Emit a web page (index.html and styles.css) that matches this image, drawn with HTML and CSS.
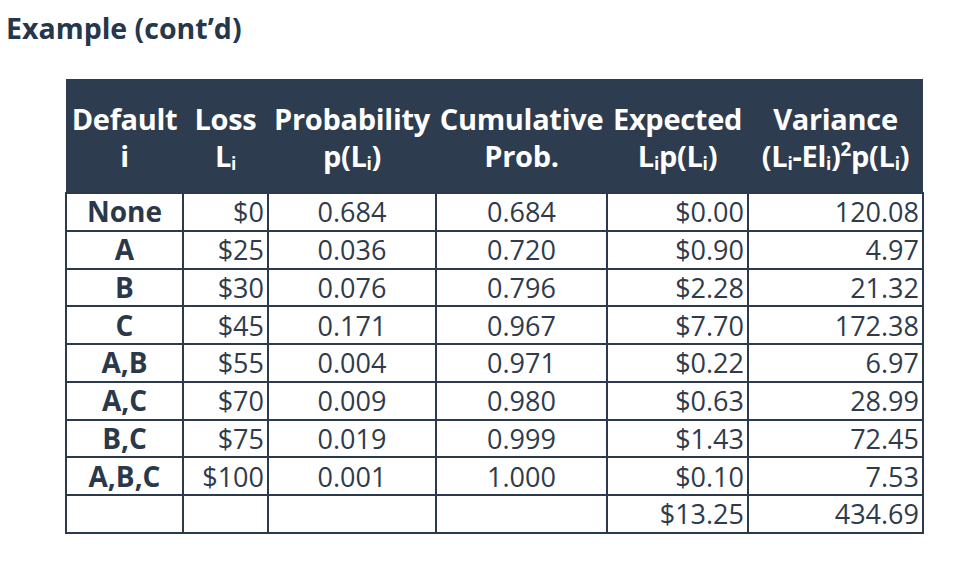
FILE: index.html
```html
<!DOCTYPE html>
<html>
<head>
<meta charset="utf-8">
<link rel="stylesheet" href="styles.css">
</head>
<body>
<h1 class="title">Example (cont’d)</h1>
<table class="tbl">
  <colgroup>
    <col class="c1"><col class="c2"><col class="c3"><col class="c4"><col class="c5"><col class="c6">
  </colgroup>
  <thead>
    <tr>
      <th>Default<br>i</th>
      <th>Loss<br>L<sub>i</sub></th>
      <th>Probability<br>p(L<sub>i</sub>)</th>
      <th>Cumulative<br>Prob.</th>
      <th>Expected<br>L<sub>i</sub>p(L<sub>i</sub>)</th>
      <th>Variance<br>(L<sub>i</sub>-El<sub>i</sub>)<sup>2</sup>p(L<sub>i</sub>)</th>
    </tr>
  </thead>
  <tbody>
    <tr><td class="nm">None</td><td class="r">$0</td><td class="c">0.684</td><td class="c">0.684</td><td class="r">$0.00</td><td class="r">120.08</td></tr>
    <tr><td class="nm">A</td><td class="r">$25</td><td class="c">0.036</td><td class="c">0.720</td><td class="r">$0.90</td><td class="r">4.97</td></tr>
    <tr><td class="nm">B</td><td class="r">$30</td><td class="c">0.076</td><td class="c">0.796</td><td class="r">$2.28</td><td class="r">21.32</td></tr>
    <tr><td class="nm">C</td><td class="r">$45</td><td class="c">0.171</td><td class="c">0.967</td><td class="r">$7.70</td><td class="r">172.38</td></tr>
    <tr><td class="nm">A,B</td><td class="r">$55</td><td class="c">0.004</td><td class="c">0.971</td><td class="r">$0.22</td><td class="r">6.97</td></tr>
    <tr><td class="nm">A,C</td><td class="r">$70</td><td class="c">0.009</td><td class="c">0.980</td><td class="r">$0.63</td><td class="r">28.99</td></tr>
    <tr><td class="nm">B,C</td><td class="r">$75</td><td class="c">0.019</td><td class="c">0.999</td><td class="r">$1.43</td><td class="r">72.45</td></tr>
    <tr><td class="nm">A,B,C</td><td class="r">$100</td><td class="c">0.001</td><td class="c">1.000</td><td class="r">$0.10</td><td class="r">7.53</td></tr>
    <tr><td class="nm"></td><td class="r"></td><td class="c"></td><td class="c"></td><td class="r">$13.25</td><td class="r">434.69</td></tr>
  </tbody>
</table>
</body>
</html>
```
FILE: styles.css
```css
html, body {
  margin: 0;
  padding: 0;
  background: #ffffff;
}
body {
  font-family: "Open Sans", "Liberation Sans", sans-serif;
  color: #2c3a4c;
  padding: 0 0 0 6px;
}
.title {
  margin: 0;
  padding-top: 9px;
  font-size: 28.5px;
  line-height: 38px;
  font-weight: 700;
  color: #26364c;
}
.tbl {
  margin: 32px 0 0 59px;
  border-collapse: collapse;
  table-layout: fixed;
  width: 857px;
}
.c1 { width: 117px; }
.c2 { width: 85px; }
.c3 { width: 168px; }
.c4 { width: 171px; }
.c5 { width: 141px; }
.c6 { width: 175px; }
.tbl th {
  background: #2e3c4f;
  color: #ffffff;
  font-size: 29px;
  font-weight: 700;
  line-height: 37px;
  padding: 21px 0 18px;
  text-align: center;
  white-space: nowrap;
  letter-spacing: -0.3px;
}
.tbl th sub {
  font-size: 60%;
  vertical-align: -0.15em;
  line-height: 0;
}
.tbl th sup {
  font-size: 65%;
  vertical-align: 0.6em;
  line-height: 0;
}
.tbl td {
  border: 2px solid #2b3a4d;
  font-size: 27px;
  line-height: 35px;
  height: 35.75px;
  padding: 0 3px;
  color: #2f3b4b;
  white-space: nowrap;
}
.tbl td.nm {
  font-weight: 700;
  font-size: 28px;
  text-align: center;
  color: #2b384a;
}
.tbl td.r {
  text-align: right;
  padding-right: 3px;
}
.tbl td.c {
  text-align: center;
}
```
